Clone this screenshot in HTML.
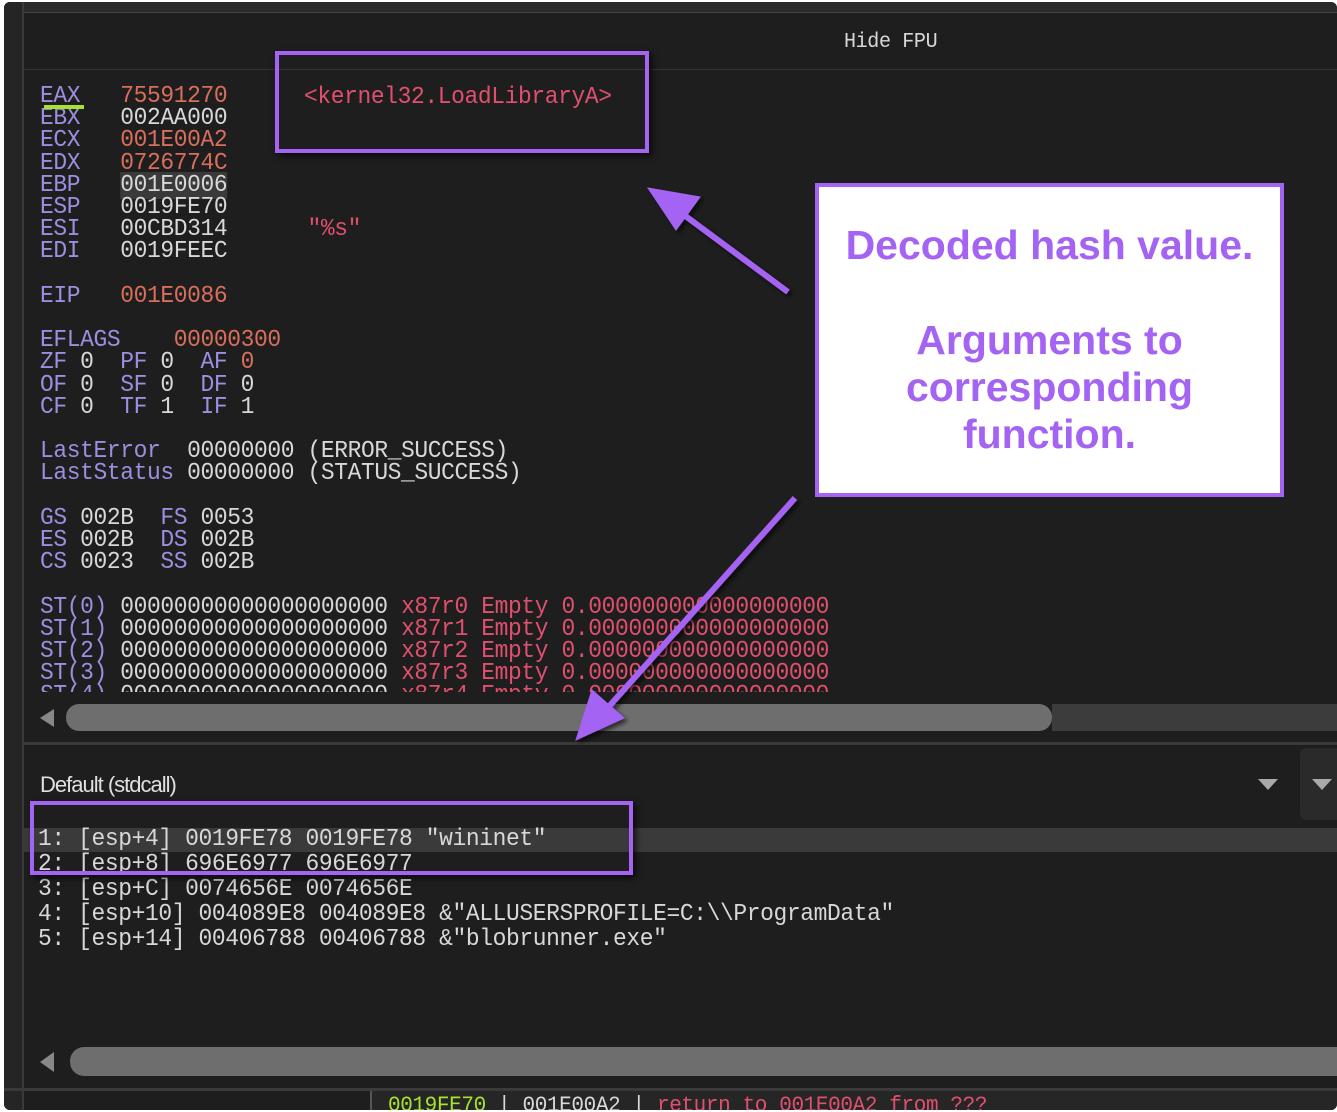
<!DOCTYPE html>
<html><head><style>
body{margin:0;width:1337px;height:1112px;background:#fff;overflow:hidden;font-family:"Liberation Mono",monospace;}
#w{position:absolute;left:4px;top:2px;width:1333px;height:1108px;background:#1e1e1e;border-radius:6px;overflow:hidden}
.t{position:absolute;font-size:24px;line-height:22.2px;white-space:pre;color:#d8d8d8;transform:scaleX(0.955);transform-origin:0 0;letter-spacing:-0.4px}
.p{color:#9d8ee0}.r{color:#d86e5c}.k{color:#e0506e}
.box{position:absolute;border:4px solid #a463f2;box-shadow:3px 3px 6px rgba(0,0,0,.7)}
</style></head><body>
<div id="w">
<div style="position:absolute;left:0;top:0;width:1333px;height:10px;background:#2a2a2a;border-bottom:1px solid #444"></div>
<div style="position:absolute;left:0;top:0;width:18px;height:1108px;background:#252525;border-right:2px solid #3a3a3a"></div>
<div style="position:absolute;left:20px;top:67px;width:1313px;height:1px;background:#333"></div>
<div class="t" style="left:840px;top:30px;font-size:21px">Hide FPU</div>
<div style="position:absolute;left:0;top:80px;width:1333px;height:610px;overflow:hidden">
<div class="t" style="left:36px;top:4px"><span class="p">EAX</span>   <span class="r">75591270</span>
<span class="p">EBX</span>   002AA000
<span class="p">ECX</span>   <span class="r">001E00A2</span>
<span class="p">EDX</span>   <span class="r">0726774C</span>
<span class="p">EBP</span>   <span style="background:#3a3a3a">001E0006</span>
<span class="p">ESP</span>   0019FE70
<span class="p">ESI</span>   00CBD314      <span class="k">"%s"</span>
<span class="p">EDI</span>   0019FEEC

<span class="p">EIP</span>   <span class="r">001E0086</span>

<span class="p">EFLAGS</span>    <span class="r">00000300</span>
<span class="p">ZF</span> 0  <span class="p">PF</span> 0  <span class="p">AF</span> <span class="r">0</span>
<span class="p">OF</span> 0  <span class="p">SF</span> 0  <span class="p">DF</span> 0
<span class="p">CF</span> 0  <span class="p">TF</span> 1  <span class="p">IF</span> 1

<span class="p">LastError</span>  00000000 (ERROR_SUCCESS)
<span class="p">LastStatus</span> 00000000 (STATUS_SUCCESS)

<span class="p">GS</span> 002B  <span class="p">FS</span> 0053
<span class="p">ES</span> 002B  <span class="p">DS</span> 002B
<span class="p">CS</span> 0023  <span class="p">SS</span> 002B

<span class="p">ST(0)</span> 00000000000000000000 <span class="k">x87r0 Empty 0.000000000000000000</span>
<span class="p">ST(1)</span> 00000000000000000000 <span class="k">x87r1 Empty 0.000000000000000000</span>
<span class="p">ST(2)</span> 00000000000000000000 <span class="k">x87r2 Empty 0.000000000000000000</span>
<span class="p">ST(3)</span> 00000000000000000000 <span class="k">x87r3 Empty 0.000000000000000000</span>
<span class="p">ST(4)</span> 00000000000000000000 <span class="k">x87r4 Empty 0.000000000000000000</span></div>
<div style="position:absolute;left:40px;top:23px;width:40px;height:4px;background:#a6e22e"></div>
</div>
<div class="t" style="left:300px;top:85px;color:#e0506e">&lt;kernel32.LoadLibraryA&gt;</div>
<div style="position:absolute;left:36px;top:707px;width:0;height:0;border-top:9px solid transparent;border-bottom:9px solid transparent;border-right:14px solid #888"></div>
<div style="position:absolute;left:62px;top:702px;width:986px;height:27px;background:#6e6e6e;border-radius:13px"></div>
<div style="position:absolute;left:1048px;top:702px;width:285px;height:27px;background:#3c3c3c"></div>
<div style="position:absolute;left:20px;top:740px;width:1313px;height:3px;background:#3a3a3a"></div>
<div style="position:absolute;left:36px;top:770px;color:#e0e0e0;font-family:'Liberation Sans',sans-serif;font-size:22px;letter-spacing:-1px">Default (stdcall)</div>
<div style="position:absolute;left:1254px;top:777px;border-left:10px solid transparent;border-right:10px solid transparent;border-top:11px solid #aaa"></div>
<div style="position:absolute;left:1296px;top:746px;width:37px;height:72px;background:#2a2a2a;border-radius:6px 0 0 6px"></div>
<div style="position:absolute;left:1308px;top:777px;border-left:10px solid transparent;border-right:10px solid transparent;border-top:11px solid #aaa"></div>
<div style="position:absolute;left:20px;top:826px;width:1313px;height:24px;background:#3a3a3a"></div>
<div class="t" style="left:34px;top:825px;line-height:25px">1: [esp+4] 0019FE78 0019FE78 "wininet"
2: [esp+8] 696E6977 696E6977
3: [esp+C] 0074656E 0074656E
4: [esp+10] 004089E8 004089E8 &amp;"ALLUSERSPROFILE=C:\\ProgramData"
5: [esp+14] 00406788 00406788 &amp;"blobrunner.exe"</div>
<div style="position:absolute;left:36px;top:1050px;border-top:10px solid transparent;border-bottom:10px solid transparent;border-right:14px solid #888"></div>
<div style="position:absolute;left:66px;top:1045px;width:1267px;height:29px;background:#6e6e6e;border-radius:14px 0 0 14px"></div>
<div style="position:absolute;left:0;top:1086px;width:1333px;height:3px;background:#3a3a3a"></div>
<div style="position:absolute;left:366px;top:1089px;width:967px;height:20px;background:#262626;border-left:2px solid #555"></div>
<div class="t" style="left:384px;top:1093px;font-size:22px"><span style="color:#a6e22e">0019FE70</span> | 001E00A2 | <span class="k">return to 001E00A2 from ???</span></div>
</div>
<div class="box" style="left:275px;top:51px;width:366px;height:94px"></div>
<div class="box" style="left:30px;top:801px;width:595px;height:66px"></div>
<div style="position:absolute;left:815px;top:183px;width:461px;height:306px;background:#fff;border:4px solid #a463f2;font-family:'Liberation Sans',sans-serif;font-size:41px;font-weight:bold;letter-spacing:0px;color:#a463f2;text-align:center;line-height:47px">
<div style="margin-top:35px">Decoded hash value.</div>
<div style="margin-top:48px">Arguments to<br>corresponding<br>function.</div></div>
<svg style="position:absolute;left:0;top:0" width="1337" height="1112">
<defs><filter id="s"><feDropShadow dx="3" dy="3" stdDeviation="2" flood-color="#000" flood-opacity=".6"/></filter></defs>
<g fill="#a463f2" stroke="#a463f2" filter="url(#s)">
<line x1="788" y1="292" x2="680" y2="212" stroke-width="6"/>
<polygon points="648,188 700,197 676,230" stroke-width="1"/>
<line x1="795" y1="498" x2="604" y2="712" stroke-width="6"/>
<polygon points="576,740 592,690 624,718" stroke-width="1"/>
</g></svg>
</body></html>
